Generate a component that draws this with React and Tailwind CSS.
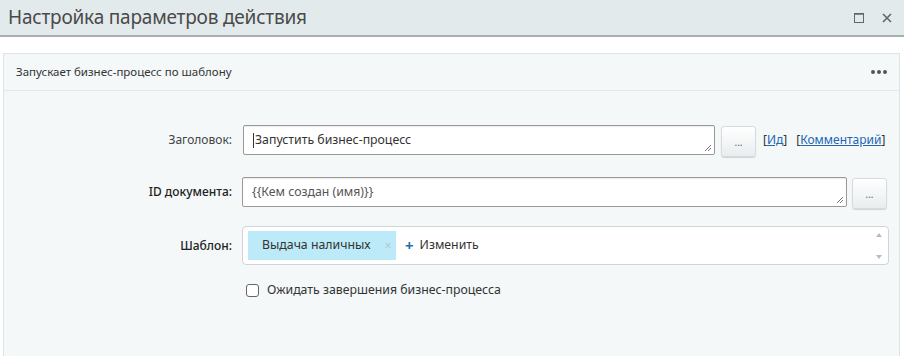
import { useState } from 'react';

const font = { fontFamily: '"Noto Sans", "Open Sans", sans-serif' };

function DotsButton({ className = '' }) {
  return (
    <button
      type="button"
      className={`h-[31px] w-[35px] shrink-0 rounded-[3px] border border-[#d5dbde] bg-gradient-to-b from-white to-[#e9edef] text-[10px] leading-none text-[#666] shadow-[0_1px_1px_rgba(0,0,0,0.15)] ${className}`}
    >
      ...
    </button>
  );
}

function Grip() {
  return (
    <svg width="8" height="8" viewBox="0 0 8 8" className="absolute bottom-[2px] right-[2px]">
      <path d="M7 1L1 7M7 4L4 7" stroke="#777" strokeWidth="1" />
    </svg>
  );
}

export default function App() {
  const [wait, setWait] = useState(false);

  return (
    <div className="h-[356px] w-[904px] overflow-hidden bg-white text-[#333]" style={font}>
      <div className="flex h-[37px] items-center justify-between border-b-2 border-[#a8adb0] bg-[#e3eaec] pl-[8px] pr-[12px]">
        <h1 className="text-[19px] leading-none tracking-[-0.2px] text-[#4a4a4a]">Настройка параметров действия</h1>
        <div className="flex items-center gap-[18px]">
          <svg width="10" height="10" viewBox="0 0 10 10">
            <rect x="0.5" y="0.5" width="9" height="9" fill="none" stroke="#666" strokeWidth="1" />
            <path d="M0 1H10" stroke="#666" strokeWidth="1.5" />
          </svg>
          <svg width="10" height="10" viewBox="0 0 10 10">
            <path d="M1 1L9 9M9 1L1 9" stroke="#666" strokeWidth="1.6" />
          </svg>
        </div>
      </div>

      <div className="ml-[3px] mr-[4px] mt-[16px] h-[320px] border border-[#dde5e8] bg-[#f4f8f9]">
        <div className="flex h-[37px] items-center justify-between border-b border-[#e1e8eb] pl-[12px] pr-[12px]">
          <span className="text-[11.5px] text-[#333]">Запускает бизнес-процесс по шаблону</span>
          <span className="flex gap-[2px]">
            <i className="block h-[4px] w-[4px] rounded-full bg-[#555]" />
            <i className="block h-[4px] w-[4px] rounded-full bg-[#555]" />
            <i className="block h-[4px] w-[4px] rounded-full bg-[#555]" />
          </span>
        </div>

        <div className="flex flex-col pt-[32px] text-[12.3px]">
          <div className="flex items-center">
            <div className="w-[230px] pr-[2px] text-right text-[12px] text-[#444]">Заголовок:</div>
            <div className="relative ml-[9px] flex h-[30px] w-[472px] items-center rounded-[2px] border border-[#9a9a9a] bg-white pl-[9px] shadow-[inset_0_1px_1px_rgba(0,0,0,0.08)]">
              <span className="mr-[1px] h-[15px] w-px bg-[#333]" />
              Запустить бизнес-процесс
              <Grip />
            </div>
            <DotsButton className="ml-[6px] mt-[3px]" />
            <span className="ml-[7px] text-[12px] text-[#333]">
              [<span className="text-[#2067b0] underline">Ид</span>]
            </span>
            <span className="ml-[9px] text-[12px] text-[#333]">
              [<span className="text-[#2067b0] underline">Комментарий</span>]
            </span>
          </div>

          <div className="mt-[18px] flex items-center">
            <div className="w-[230px] pr-[2px] text-right text-[12px] font-medium text-[#222]">ID документа:</div>
            <div className="relative ml-[8px] flex h-[30px] w-[605px] items-center rounded-[2px] border border-[#9a9a9a] bg-white pl-[9px] text-[#555] shadow-[inset_0_1px_1px_rgba(0,0,0,0.08)]">
              {'{{Кем создан (имя)}}'}
              <Grip />
            </div>
            <DotsButton className="ml-[5px] mt-[3px]" />
          </div>

          <div className="mt-[17px] flex items-center">
            <div className="w-[230px] pr-[2px] text-right text-[12px] font-medium text-[#222]">Шаблон:</div>
            <div className="relative ml-[8px] flex h-[39px] w-[647px] items-center rounded-[4px] border border-[#cfd4d6] bg-white pl-[5px]">
              <span className="flex h-[29px] w-[148px] items-center bg-[#bdeaf8] pl-[14px] text-[#333]">
                Выдача наличных
                <span className="ml-[14px] text-[12px] text-[#b5c9d0]">×</span>
              </span>
              <span className="ml-[9px] flex items-center text-[#333]">
                <span className="mr-[6px] text-[15px] font-bold leading-none text-[#1f6fa8]">+</span>
                Изменить
              </span>
              <div className="absolute right-[6px] top-[6px] flex h-[26px] flex-col justify-between">
                <svg width="6" height="4" viewBox="0 0 6 4"><path d="M0 4L3 0L6 4Z" fill="#bbb" /></svg>
                <svg width="6" height="4" viewBox="0 0 6 4"><path d="M0 0L3 4L6 0Z" fill="#bbb" /></svg>
              </div>
            </div>
          </div>

          <label className="ml-[242px] mt-[16px] flex items-center text-[#333]">
            <input
              type="checkbox"
              checked={wait}
              onChange={(e) => setWait(e.target.checked)}
              className="h-[13px] w-[13px] appearance-none rounded-[3px] border border-[#666] bg-white"
            />
            <span className="ml-[8px]">Ожидать завершения бизнес-процесса</span>
          </label>
        </div>
      </div>
    </div>
  );
}
